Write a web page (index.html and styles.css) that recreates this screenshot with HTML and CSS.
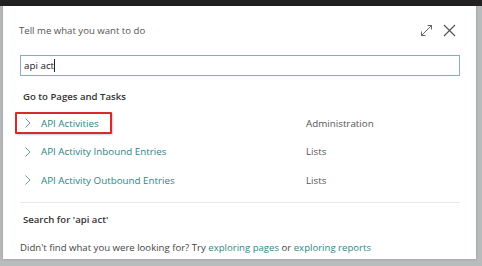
FILE: index.html
```html
<!DOCTYPE html>
<html>
<head>
<meta charset="utf-8">
<link rel="stylesheet" href="styles.css">
</head>
<body>
<div class="topbar"></div>
<div class="stage">
  <div class="dialog">
    <div class="header">
      <span class="title">Tell me what you want to do</span>
      <div class="actions">
        <svg class="icon" width="13" height="13" viewBox="0 0 13 13" fill="none" stroke="#666" stroke-width="1">
          <path d="M1.5 11.5 L11.5 1.5 M7.5 1.5 H11.5 V5.5 M1.5 7.5 V11.5 H5.5"/>
        </svg>
        <svg class="icon" width="13" height="13" viewBox="0 0 13 13" fill="none" stroke="#555" stroke-width="1.2">
          <path d="M1 1 L12 12 M12 1 L1 12"/>
        </svg>
      </div>
    </div>
    <div class="search"><span>api act</span><span class="caret"></span></div>
    <div class="section-title">Go to Pages and Tasks</div>
    <ul class="results">
      <li class="row"><span class="hit selected"><svg class="chev" width="6" height="10" viewBox="0 0 6 10" fill="none" stroke="#6f9c9c" stroke-width="1"><path d="M0.5 0.5 L5 5 L0.5 9.5"/></svg><span class="link">API Activities</span></span><span class="cat">Administration</span></li>
      <li class="row"><span class="hit"><svg class="chev" width="6" height="10" viewBox="0 0 6 10" fill="none" stroke="#6f9c9c" stroke-width="1"><path d="M0.5 0.5 L5 5 L0.5 9.5"/></svg><span class="link">API Activity Inbound Entries</span></span><span class="cat">Lists</span></li>
      <li class="row"><span class="hit"><svg class="chev" width="6" height="10" viewBox="0 0 6 10" fill="none" stroke="#6f9c9c" stroke-width="1"><path d="M0.5 0.5 L5 5 L0.5 9.5"/></svg><span class="link">API Activity Outbound Entries</span></span><span class="cat">Lists</span></li>
    </ul>
    <div class="divider"></div>
    <div class="section-title search-for">Search for 'api act'</div>
    <div class="footer">Didn't find what you were looking for? Try <a>exploring pages</a> or <a>exploring reports</a></div>
  </div>
</div>
</body>
</html>
```
FILE: styles.css
```css
* { box-sizing: border-box; }
html, body { margin: 0; padding: 0; }
body {
  width: 482px; height: 266px; overflow: hidden;
  background: #b9bcbc;
  font-family: "Open Sans", "Segoe UI", sans-serif;
  color: #333;
}
.topbar { height: 6px; background: #222; }
.stage { padding: 0 6px 7px 3px; }
.dialog {
  background: #fff;
  height: 253px;
  padding: 0 16px 0 17px;
  box-shadow: 0 0 3px rgba(0,0,0,0.2);
}
.header {
  display: flex; align-items: center; justify-content: space-between;
  height: 46px; padding-top: 2px;
}
.title { font-size: 9.6px; color: #555; margin-left: -1px; }
.actions { display: flex; gap: 10px; align-items: center; margin-right: 4px; }
.icon { display: block; }
.search {
  height: 21px; border: 1px solid #86aeb0;
  padding: 0 3px; font-size: 9.8px; color: #222;
  display: flex; align-items: center; margin-top: 3px;
}
.caret { width: 1px; height: 13px; background: #222; margin-left: 0; }
.section-title { font-size: 9.6px; font-weight: 600; color: #333; margin: 14px 0 0 3px; }
.results { list-style: none; margin: 6px 0 0; padding: 0; }
.row { display: flex; align-items: center; height: 28.5px; font-size: 9.8px; }
.hit {
  display: flex; align-items: center; width: 291px;
  height: 22px; margin-left: -5px; padding-left: 8px;
  border: 2px solid transparent;
}
.hit.selected { border-color: #d9292b; width: 97px; margin-right: 194px; border-radius: 1px; box-shadow: 1px 1px 2px rgba(0,0,0,0.2); }
.chev { display: block; margin-right: 10px; flex: none; }
.link { color: #2a8584; white-space: nowrap; }
.cat { color: #555; }
.divider { height: 1px; background: #e8e8e8; margin-top: 7px; }
.search-for { margin-top: 10px; }
.footer { font-size: 9.6px; color: #444; margin-top: 15px; }
.footer a { color: #2a8a8a; }
```
